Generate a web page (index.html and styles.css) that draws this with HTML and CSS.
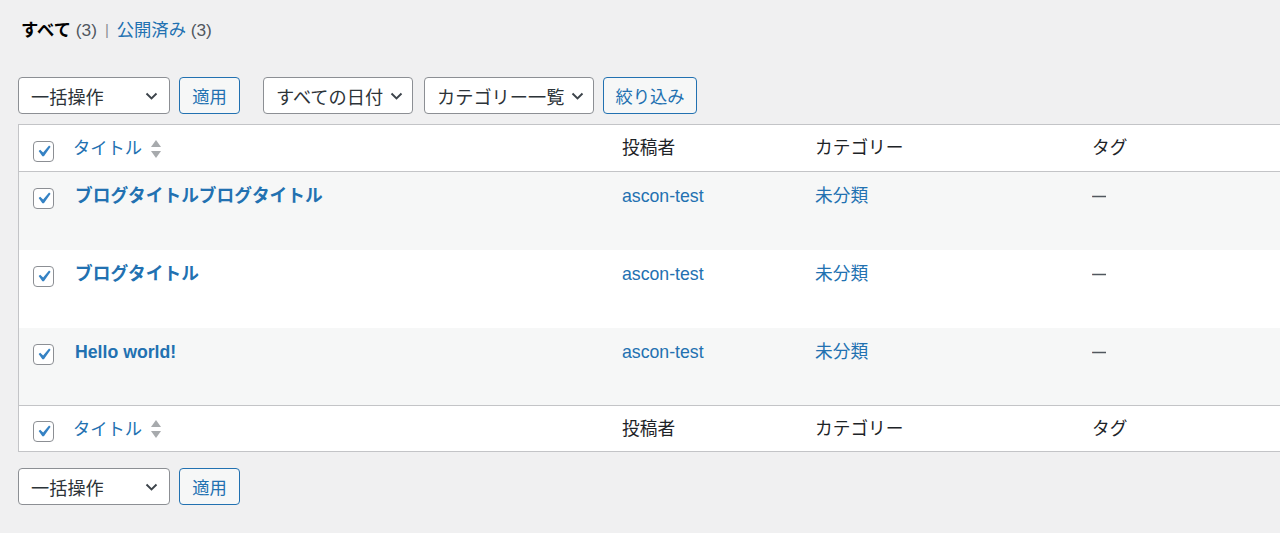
FILE: index.html
```html
<!DOCTYPE html>
<html lang="ja">
<head>
    <meta charset="UTF-8">
    <meta name="viewport" content="width=device-width, initial-scale=1.0">
    <title>投稿一覧</title>
    <link rel="stylesheet" href="styles.css">
</head>
<body>
    <div class="wrap">
        <ul class="subsubsub">
            <li><span class="current">すべて</span> <span class="count">(3)</span></li>
            <li class="sep">|</li>
            <li><a href="#">公開済み</a> <span class="count">(3)</span></li>
        </ul>

        <div class="tablenav top">
            <div class="select bulk">一括操作
                <svg class="chev" viewBox="0 0 12 8"><polyline points="1,1.5 6,6.5 11,1.5"/></svg>
            </div>
            <button class="btn">適用</button>
            <div class="select date">すべての日付
                <svg class="chev" viewBox="0 0 12 8"><polyline points="1,1.5 6,6.5 11,1.5"/></svg>
            </div>
            <div class="select cat">カテゴリー一覧
                <svg class="chev" viewBox="0 0 12 8"><polyline points="1,1.5 6,6.5 11,1.5"/></svg>
            </div>
            <button class="btn filter">絞り込み</button>
        </div>

        <table class="posts">
            <colgroup>
                <col class="c-check">
                <col class="c-title">
                <col class="c-author">
                <col class="c-cat">
                <col class="c-tags">
            </colgroup>
            <thead>
                <tr>
                    <th class="check"><span class="cb"><svg viewBox="0 0 20 20"><path d="M14.83 4.89l1.34.94-5.81 8.38H9.02L5.78 9.67l1.34-1.25 2.57 2.4z"/></svg></span></th>
                    <th class="title-head"><a href="#">タイトル</a>
                        <svg class="sort" viewBox="0 0 10 18"><polygon points="5,0 10,7 0,7"/><polygon points="0,11 10,11 5,18"/></svg>
                    </th>
                    <th>投稿者</th>
                    <th>カテゴリー</th>
                    <th>タグ</th>
                </tr>
            </thead>
            <tbody>
                <tr class="alt r1">
                    <td class="check"><span class="cb"><svg viewBox="0 0 20 20"><path d="M14.83 4.89l1.34.94-5.81 8.38H9.02L5.78 9.67l1.34-1.25 2.57 2.4z"/></svg></span></td>
                    <td class="title"><a href="#">ブログタイトルブログタイトル</a></td>
                    <td><a href="#">ascon-test</a></td>
                    <td><a href="#">未分類</a></td>
                    <td><span class="dash">—</span></td>
                </tr>
                <tr class="r2">
                    <td class="check"><span class="cb"><svg viewBox="0 0 20 20"><path d="M14.83 4.89l1.34.94-5.81 8.38H9.02L5.78 9.67l1.34-1.25 2.57 2.4z"/></svg></span></td>
                    <td class="title"><a href="#">ブログタイトル</a></td>
                    <td><a href="#">ascon-test</a></td>
                    <td><a href="#">未分類</a></td>
                    <td><span class="dash">—</span></td>
                </tr>
                <tr class="alt r3">
                    <td class="check"><span class="cb"><svg viewBox="0 0 20 20"><path d="M14.83 4.89l1.34.94-5.81 8.38H9.02L5.78 9.67l1.34-1.25 2.57 2.4z"/></svg></span></td>
                    <td class="title"><a href="#">Hello world!</a></td>
                    <td><a href="#">ascon-test</a></td>
                    <td><a href="#">未分類</a></td>
                    <td><span class="dash">—</span></td>
                </tr>
            </tbody>
            <tfoot>
                <tr>
                    <th class="check"><span class="cb"><svg viewBox="0 0 20 20"><path d="M14.83 4.89l1.34.94-5.81 8.38H9.02L5.78 9.67l1.34-1.25 2.57 2.4z"/></svg></span></th>
                    <th class="title-head"><a href="#">タイトル</a>
                        <svg class="sort" viewBox="0 0 10 18"><polygon points="5,0 10,7 0,7"/><polygon points="0,11 10,11 5,18"/></svg>
                    </th>
                    <th>投稿者</th>
                    <th>カテゴリー</th>
                    <th>タグ</th>
                </tr>
            </tfoot>
        </table>

        <div class="tablenav bottom">
            <div class="select bulk">一括操作
                <svg class="chev" viewBox="0 0 12 8"><polyline points="1,1.5 6,6.5 11,1.5"/></svg>
            </div>
            <button class="btn">適用</button>
        </div>
    </div>
</body>
</html>
```

FILE: styles.css
```css
body {
    margin: 0;
    padding: 0;
    background: #f0f0f1;
    color: #3c434a;
    font-family: "Liberation Sans", "Noto Sans CJK JP", sans-serif;
    font-size: 17.7px;
    overflow: hidden;
}
a {
    color: #2271b1;
    text-decoration: none;
}
.wrap {
    padding-left: 18px;
    width: 1300px;
}

/* status links */
.subsubsub {
    list-style: none;
    margin: 0;
    padding: 17px 0 0 3px;
    height: 26px;
    line-height: 26px;
    display: flex;
    gap: 8px;
    color: #50575e;
    font-size: 17.3px;
}
.subsubsub .current {
    color: #000;
    font-weight: 700;
}
.subsubsub .sep {
    color: #8c8f94;
    font-size: 15px;
}

/* toolbar */
.tablenav {
    display: flex;
    align-items: center;
    height: 37px;
}
.tablenav.top {
    margin-top: 34px;
    margin-bottom: 10px;
}
.tablenav.bottom {
    margin-top: 16px;
}
.select {
    box-sizing: border-box;
    height: 37px;
    display: flex;
    align-items: center;
    padding: 0 11px 0 12px;
    background: #fff;
    border: 1px solid #8c8f94;
    border-radius: 4px;
    color: #2c3338;
    font-size: 18.2px;
    white-space: nowrap;
}
.select .chev {
    flex: none;
    width: 13px;
    height: 8px;
    margin-left: auto;
    fill: none;
    stroke: #3c434a;
    stroke-width: 1.9;
}
.select.bulk {
    width: 152px;
}
.select.date {
    width: 150px;
    margin-left: 23px;
    padding-right: 9px;
}
.select.cat {
    width: 170px;
    margin-left: 11px;
    padding-right: 9px;
}
.btn {
    box-sizing: border-box;
    height: 37px;
    margin-left: 9px;
    padding: 0;
    background: #f6f7f7;
    border: 1px solid #2271b1;
    border-radius: 4px;
    color: #2271b1;
    font-family: inherit;
    font-size: 17.3px;
    white-space: nowrap;
    width: 61px;
}
.btn.filter {
    width: 94px;
}

/* table */
.posts {
    width: 1290px;
    table-layout: fixed;
    border-collapse: separate;
    border-spacing: 0;
    background: #fff;
    border: 1px solid #c3c4c7;
}
.c-check { width: 44px; }
.c-title { width: 548px; }
.c-author { width: 193px; }
.c-cat { width: 277px; }
.posts th,
.posts td {
    box-sizing: border-box;
}
.posts th {
    height: 47px;
    padding: 0 0 0 11px;
    text-align: left;
    font-weight: 400;
    color: #1d2327;
    vertical-align: middle;
    line-height: 24px;
}
.posts thead th {
    border-bottom: 1px solid #c3c4c7;
}
.posts tfoot th {
    border-top: 1px solid #c3c4c7;
    height: 46px;
}
.posts th.title-head {
    padding-left: 10px;
    font-size: 17.3px;
}
.posts th.title-head a {
    vertical-align: middle;
}
.sort {
    width: 10px;
    height: 18px;
    margin-left: 4px;
    vertical-align: middle;
    fill: #a7aaad;
}
.posts td {
    padding: 11px 0 0 11px;
    vertical-align: top;
    line-height: 26px;
}
.posts tr.r1 td { height: 78px; }
.posts tr.r2 td { height: 78px; }
.posts tr.r3 td { height: 77px; }
.posts tr.alt td {
    background: #f6f7f7;
}
.posts td.title {
    padding-left: 12px;
    font-weight: 700;
}
.dash {
    display: inline-block;
    width: 14px;
    overflow: hidden;
    vertical-align: top;
    font-size: 15px;
    font-weight: 700;
    color: #50575e;
}
.posts .check {
    padding: 0 0 0 14px;
}
.posts td.check {
    padding-top: 16px;
}
.posts th.check {
    padding-top: 6px;
}
.cb {
    box-sizing: border-box;
    display: block;
    width: 21px;
    height: 21px;
    background: #fff;
    border: 1px solid #8c8f94;
    border-radius: 4px;
}
.cb svg {
    display: block;
    width: 23px;
    height: 23px;
    margin: -2px 0 0 -2px;
    fill: #3582c4;
}
```
